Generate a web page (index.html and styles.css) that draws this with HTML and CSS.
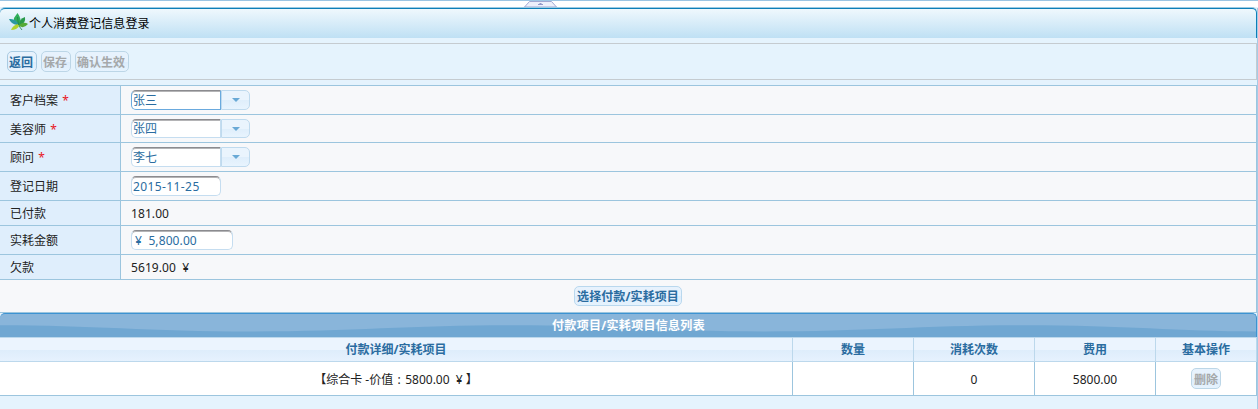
FILE: index.html
```
<!DOCTYPE html>
<html lang="zh-CN">
<head>
<meta charset="utf-8">
<title>个人消费登记信息登录</title>
<link rel="stylesheet" href="styles.css">
</head>
<body>
<div class="page">
  <div class="splitter">
    <svg class="handle" width="33" height="6" viewBox="0 0 33 6"><path d="M.5 6 5.500.5h22L32.500 6z" fill="#edf0fb" stroke="#a3a9d3"/><path d="M14 3.500h5M15.500 2.500h2" stroke="#9299c9"/></svg>
  </div>
  <div class="panel">
    <header class="title">
      <svg class="leaf" width="19" height="18" viewBox="0 0 19 18">
        <path d="M9 13Q4 9 5 5L8.500 0Q13 6 11 12z" fill="#2fae58"/>
        <path d="M8 12Q2 11 0 6Q7 5 10 12z" fill="#2b98a0"/>
        <path d="M9 11Q4 12 2 17Q8 17 10 13z" fill="#b0d22d"/>
        <path d="M10 12Q10 6 16 4Q17 10 11 13z" fill="#2b9a4b"/>
        <path d="M10 12Q15 8 19 11Q15 16 10 13z" fill="#55aa36"/>
        <path d="M9.500 12 8.500 4M10 13l3 4" stroke="#1f8048" stroke-width=".8" fill="none"/>
      </svg>
      <span>个人消费登记信息登录</span>
    </header>
    <div class="toolbar">
      <button class="btn">返回</button>
      <button class="btn off">保存</button>
      <button class="btn off">确认生效</button>
    </div>
    <div class="form">
      <div class="row r28"><label>客户档案 <i>*</i></label><div class="value"><span class="combo active"><span class="field">张三</span><span class="drop"><b></b></span></span></div></div>
      <div class="row r27"><label>美容师 <i>*</i></label><div class="value"><span class="combo"><span class="field">张四</span><span class="drop"><b></b></span></span></div></div>
      <div class="row r28"><label>顾问 <i>*</i></label><div class="value"><span class="combo"><span class="field">李七</span><span class="drop"><b></b></span></span></div></div>
      <div class="row r28"><label>登记日期</label><div class="value"><span class="field date">2015-11-25</span></div></div>
      <div class="row r24"><label>已付款</label><div class="value plain">181.00</div></div>
      <div class="row r28"><label>实耗金额</label><div class="value"><span class="field money">¥&nbsp; 5,800.00</span></div></div>
      <div class="row r24"><label>欠款</label><div class="value plain">5619.00 &nbsp;¥</div></div>
      <div class="choose"><button class="btn">选择付款/实耗项目</button></div>
    </div>
    <div class="caption">
      <svg class="wave" width="1257" height="23" viewBox="0 0 1257 23">
        <path d="M0 11.300C90 11.300 150 17.500 250 17.500S410 11.300 512 11.300S665 17.500 765 17.500S925 11.300 1025 11.300S1180 17.500 1257 17.500V23H0z" fill="#70a7d2"/>
      </svg>
      <span>付款项目/实耗项目信息列表</span>
    </div>
    <div class="grid head"><div>付款详细/实耗项目</div><div>数量</div><div>消耗次数</div><div>费用</div><div>基本操作</div></div>
    <div class="grid body"><div class="item">【综合卡 -价值<span class="colon">:</span>5800.00 &nbsp;¥ 】</div><div></div><div>0</div><div>5800.00</div><div class="action"><button class="btn off">删除</button></div></div>
  </div>
</div>
</body>
</html>
```
FILE: styles.css
```
* { box-sizing: border-box; }
body {
  margin: 0;
  font: 12px/16px "Noto Sans", "Noto Sans CJK SC", sans-serif;
  color: #222;
  background: #e5f3fd;
}
.page { height: 409px; overflow: hidden; }
.splitter {
  height: 7px;
  border-top: 1px solid #9cc5e3;
  background: #fff;
  padding-left: 524px;
}
.handle { display: block; }
.panel {
  height: 402px;
  border-right: 1px solid #a5cbe6;
  background: #e5f3fd;
}
.title {
  height: 30px;
  margin-top: 1px;
  border-top: 1px solid #0d7fb8;
  border-right: 1px solid #0d7fb8;
  border-radius: 5px 5px 0 0;
  background: linear-gradient(#eff8fd, #bfe0f4);
  box-shadow: 0 -1px 0 #9ccbe3;
  display: flex;
  align-items: center;
  padding-left: 9px;
  color: #000;
}
.leaf { margin-top: -3px; }
.title span { margin-left: 1px; padding-top: 1px; letter-spacing: .05px; }
.toolbar {
  margin: 5px 0;
  height: 37px;
  border: 1px solid #c5cbd0;
  border-left: 0;
  display: flex;
  align-items: center;
  gap: 4px;
  padding-left: 7px;
}
.btn {
  height: 21px;
  padding: 1px 2px 0;
  border: 1px solid #b9d8ee;
  border-radius: 5px;
  background: linear-gradient(#e7f2fd 50%, #dcecfb 51%, #e6f3fe);
  font: bold 12px/17px "Noto Sans", "Noto Sans CJK SC", sans-serif;
  color: #2a6ca0;
}
.toolbar .btn { border-color: #a9cbe2; padding-left: 1px; padding-right: 3px; }
.btn.off { color: #a5a8aa; border-color: #bcd6e7; }
.form { border-top: 1px solid #9cc5de; border-right: 1px solid #9cc5de; background: #f7f8fa; }
.row {
  display: grid;
  grid-template-columns: 121px 1fr;
  border-bottom: 1px solid #9cc5de;
}
.r28 { height: 29px; }
.r27 { height: 28px; }
.r24 { height: 25px; }
.row label {
  display: flex;
  align-items: center;
  padding: 2px 0 0 10px;
  white-space: pre;
  background: #dfeefc;
  border-right: 1px solid #9cc5de;
}
.row i { color: #e8141b; font-style: normal; margin-left: 1px; }
.value { display: flex; align-items: center; padding-left: 10px; }
.plain { padding-top: 2px; letter-spacing: .08px; }
.combo { display: flex; }
.field {
  width: 90px;
  height: 20px;
  padding: 1px 0 0 1px;
  border: 1px solid #c5ddf0;
  border-top: 1px solid #8b8b8f;
  border-radius: 5px 0 0 5px;
  box-shadow: inset 0 1px 0 #b4b4b6;
  background: #fff;
  color: #2a6ca0;
  line-height: 18px;
}
.active .field { border-right-color: #6aaade; border-bottom-color: #6aaade; border-left-color: #6aaade; }
.date { border-radius: 5px; letter-spacing: .4px; }
.money { width: 102px; border-radius: 5px; padding-left: 3px; letter-spacing: .1px; }
.drop {
  width: 29px;
  height: 20px;
  border: 1px solid #bfdaee;
  border-radius: 0 5px 5px 0;
  background: linear-gradient(#eaf4fd 50%, #dfeefb 51%, #e8f4fe);
  display: flex;
  align-items: center;
  justify-content: center;
}
.r27 .field, .r27 .drop { height: 19px; }
.r27 .field { padding-top: 0; }
.drop b { border: 4px solid transparent; border-top-color: #69a9d6; border-bottom: 0; }
.choose {
  height: 33px;
  border-bottom: 1px solid #9cc5de;
  display: flex;
  align-items: center;
  justify-content: center;
}
.choose .btn { height: 20px; letter-spacing: .1px; }
.caption {
  height: 24px;
  border-top: 1px solid #3d93d2;
  border-right: 1px solid #3d93d2;
  border-radius: 5px 5px 0 0;
  background: #89b5da;
  display: grid;
  overflow: hidden;
  color: #fff;
  font-weight: bold;
}
.caption > * { grid-area: 1 / 1; }
.caption span { z-index: 1; place-self: center; letter-spacing: .3px; }
.grid {
  display: grid;
  grid-template-columns: 793px 121px 121px 121px 101px;
}
.grid > div {
  display: flex;
  align-items: center;
  justify-content: center;
  border-right: 1px solid #9cc5de;
  border-bottom: 1px solid #9cc5de;
}
.head {
  height: 25px;
  border-top: 1px solid #bcd8ec;
  background: linear-gradient(#ebf4fe 50%, #deedfb 51%, #e7f2fe);
  color: #2a6ca0;
  font-weight: bold;
}
.grid.head > div { border-color: #bcd8ec; padding-top: 1px; }
.body { height: 34px; background: #fff; }
.body > div { padding-top: 2px; }
.body > .action { padding-top: 0; }
.body .item { white-space: pre; }
.colon { width: 12px; text-align: center; }
```
